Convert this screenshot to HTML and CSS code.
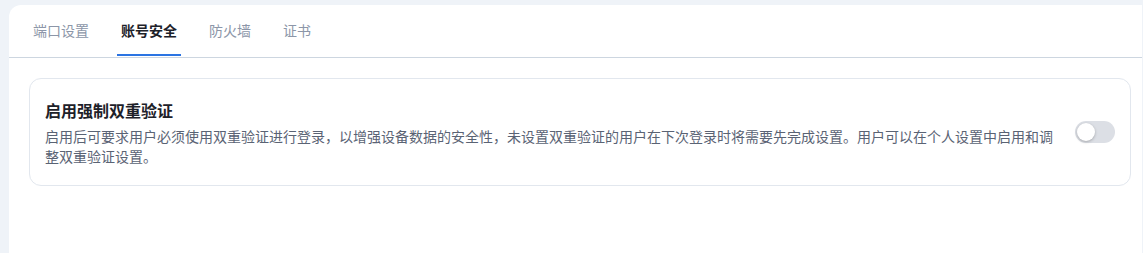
FILE: index.html
```html
<!DOCTYPE html>
<html lang="zh-CN">

    <head>
        <meta charset="UTF-8">
        <meta name="viewport" content="width=device-width, initial-scale=1.0">
        <title>账号安全</title>
        <link rel="stylesheet" href="styles.css">
    </head>

    <body>
        <div class="panel">
            <div class="tabs">
                <div class="tab">端口设置</div>
                <div class="tab active">账号安全</div>
                <div class="tab">防火墙</div>
                <div class="tab">证书</div>
            </div>
            <div class="content">
                <div class="card">
                    <div class="cardText">
                        <h3>启用强制双重验证</h3>
                        <p>启用后可要求用户必须使用双重验证进行登录，以增强设备数据的安全性，未设置双重验证的用户在下次登录时将需要先完成设置。用户可以在个人设置中启用和调整双重验证设置。</p>
                    </div>
                    <div class="switch"><span class="knob"></span></div>
                </div>
            </div>
        </div>
    </body>

</html>
```

FILE: styles.css
```css
* {
    box-sizing: border-box;
    padding: 0;
    margin: 0;
}

body {
    height: 100vh;
    overflow: hidden;
    background-color: #eff3f8;
    padding: 5px 1px 0 9px;
    font-family: "Noto Sans CJK SC", "Noto Sans", sans-serif;
}

.panel {
    height: 100%;
    background-color: #fff;
    border-radius: 12px 0 0 0;
}

.tabs {
    display: flex;
    gap: 24px;
    padding: 0 20px;
    height: 53px;
    border-bottom: 1px solid #cdd6e0;
}

.tab {
    display: flex;
    align-items: center;
    padding: 0 4px;
    font-size: 14px;
    color: #8c96a8;
    border-bottom: 2px solid transparent;
    margin-bottom: -1px;
    height: 51px;
}

.tab.active {
    color: #1d2129;
    font-weight: 700;
    border-bottom-color: #2b74e2;
}

.content {
    padding: 20px 11px 0 20px;
}

.card {
    display: flex;
    align-items: center;
    gap: 16px;
    border: 1px solid #e2e7ee;
    border-radius: 12px;
    padding: 19px 15px;
}

.cardText {
    flex: 1;
}

.cardText h3 {
    font-size: 16px;
    line-height: 24px;
    font-weight: 700;
    color: #1d2129;
    margin-bottom: 4px;
}

.cardText p {
    font-size: 14px;
    line-height: 20px;
    color: #5a6374;
}

.switch {
    width: 40px;
    height: 22px;
    border-radius: 11px;
    background-color: #dcdfe5;
    padding: 2px;
    flex-shrink: 0;
}

.knob {
    display: block;
    width: 18px;
    height: 18px;
    border-radius: 50%;
    background-color: #fff;
    box-shadow: 0 1px 3px rgba(0, 0, 0, 0.25);
}
```
